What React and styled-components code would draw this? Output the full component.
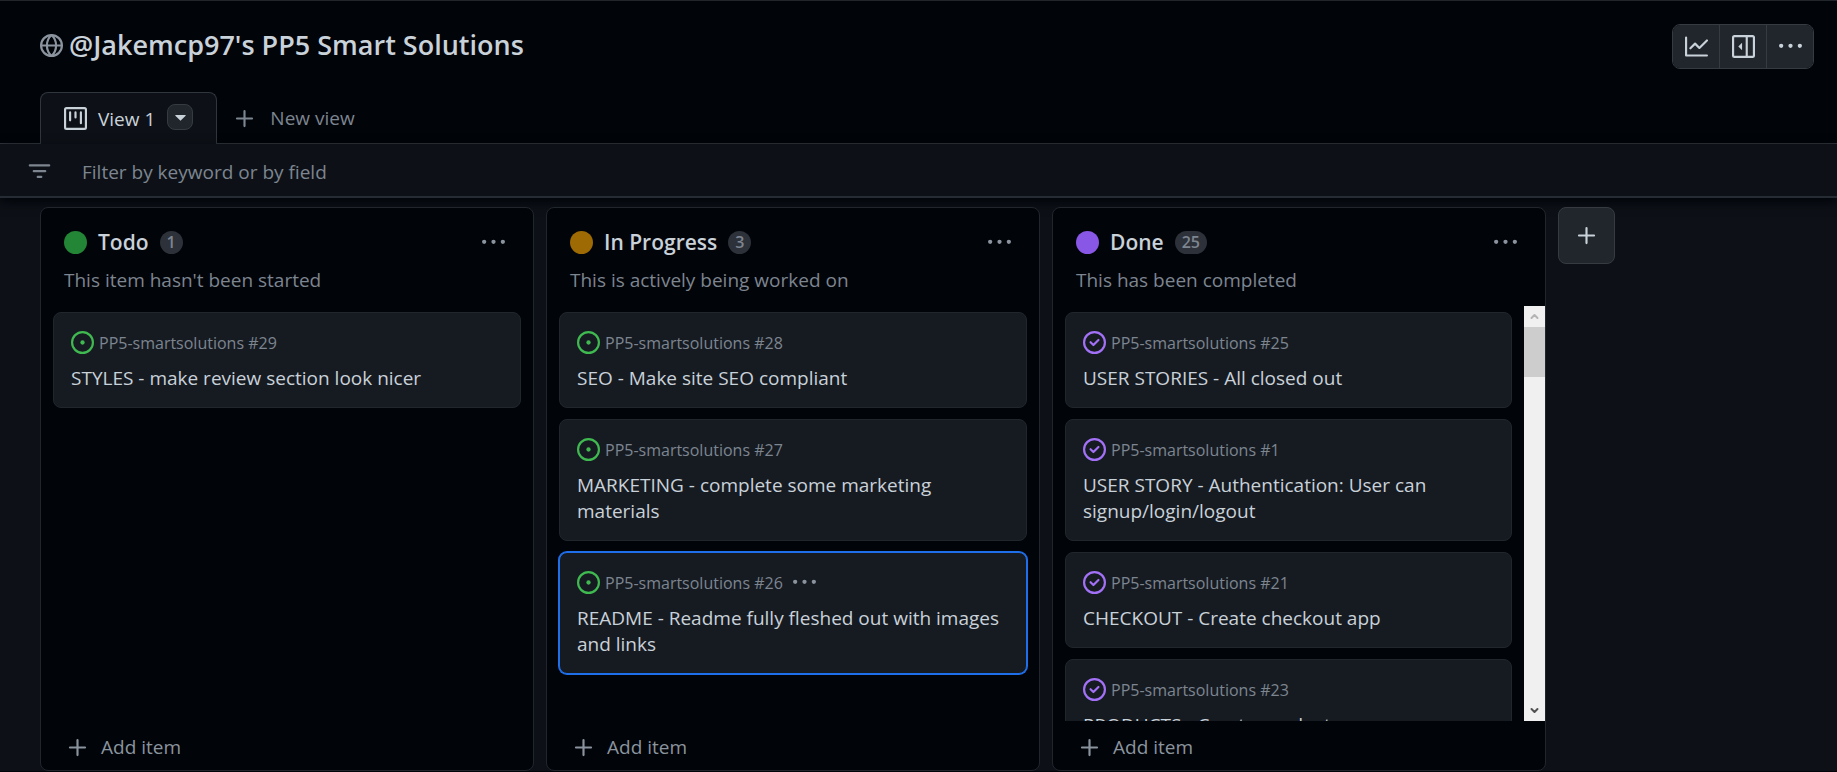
import React from "react";
import styled, { createGlobalStyle } from "styled-components";

const Global = createGlobalStyle`
  *, *::before, *::after { box-sizing: border-box; }
  body {
    margin: 0;
    background: #0d1117;
    color: #c9d1d9;
    font-family: "Segoe UI", "Open Sans", "Noto Sans", sans-serif;
    font-size: 19px;
    line-height: 26px;
  }
  button, input { font: inherit; color: inherit; }
  h1, h2, h3, p, ul { margin: 0; padding: 0; }
  ul { list-style: none; }
`;

const Page = styled.div`
  display: flex;
  flex-direction: column;
  height: 100vh;
  border-bottom: 1px solid #010409;
`;

const Header = styled.header`
  display: flex;
  justify-content: space-between;
  align-items: center;
  padding: 23px 23px 23px 40px;
  background: #010409;
  border-top: 1px solid #21262d;
`;

const TitleGroup = styled.div`
  display: flex;
  align-items: center;
  gap: 6px;
  padding-bottom: 3px;
  color: #8b949e;
`;

const Title = styled.h1`
  color: #c9d1d9;
  font-size: 27px;
  font-weight: 600;
  line-height: 36px;
`;

const ButtonGroup = styled.div`
  display: flex;
  border: 1px solid #363b42;
  border-radius: 8px;
  overflow: hidden;
`;

const GroupButton = styled.button`
  display: flex;
  align-items: center;
  justify-content: center;
  width: 46px;
  height: 43px;
  padding: 0;
  border: 0;
  background: #21262d;
  color: #c9d1d9;
  & + & {
    width: 47px;
    border-left: 1px solid #363b42;
  }
`;

const Tabs = styled.nav`
  display: flex;
  align-items: stretch;
  height: 52px;
  padding-left: 40px;
  background: #010409;
  box-shadow: inset 0 -1px #30363d;
`;

const Tab = styled.div`
  display: flex;
  align-items: center;
  padding: 0 23px;
  border: 1px solid #30363d;
  border-bottom: 0;
  border-radius: 8px 8px 0 0;
  background: #0d1117;
`;

const TabLink = styled.a`
  display: flex;
  align-items: center;
  gap: 11px;
  color: #c9d1d9;
  text-decoration: none;
`;

const TabMenu = styled.button`
  display: flex;
  align-items: center;
  justify-content: center;
  width: 26px;
  height: 26px;
  margin: 0 0 4px 12px;
  padding: 0;
  border: 1px solid #363b42;
  border-radius: 8px;
  background: #21262d;
`;

const NewView = styled.button`
  display: flex;
  align-items: center;
  gap: 14px;
  padding: 0 16px;
  border: 0;
  background: none;
  color: #7d8590;
`;

const FilterBar = styled.label`
  display: flex;
  align-items: center;
  gap: 31px;
  height: 54px;
  padding: 3px 28px 0;
  border-bottom: 2px solid #262c33;
  box-shadow: 0 4px 10px #010409;
  color: #7d8590;
`;

const FilterInput = styled.input`
  flex: 1;
  padding: 0;
  border: 0;
  outline: 0;
  background: none;
  &::placeholder { color: #7d8590; opacity: 1; }
`;

const Board = styled.main`
  display: flex;
  flex: 1;
  align-items: stretch;
  gap: 12px;
  min-height: 0;
  padding: 9px 40px 0;
`;

const Column = styled.section`
  display: flex;
  flex-direction: column;
  flex: 0 0 494px;
  min-height: 0;
  border: 1px solid #21262d;
  border-radius: 8px;
  background: #010409;
`;

const ColumnHeader = styled.header`
  padding: 22px 23px 13px;
`;

const ColumnTitleRow = styled.div`
  display: flex;
  align-items: center;
  gap: 11px;
  margin-bottom: 13px;
`;

const Dot = styled.span`
  width: 23px;
  height: 23px;
  border-radius: 50%;
  background: ${(p) => p.$color};
`;

const ColumnTitle = styled.h2`
  font-size: 21px;
  font-weight: 600;
  line-height: 24px;
`;

const Count = styled.span`
  min-width: 22px;
  padding: 0 7px;
  border-radius: 12px;
  background: #2d3139;
  color: #7d8590;
  font-size: 16px;
  font-weight: 600;
  line-height: 23px;
  text-align: center;
`;

const IconButton = styled.button`
  display: flex;
  padding: 0;
  border: 0;
  background: none;
  color: #8b949e;
  margin-left: ${(p) => (p.$end ? "auto" : "5px")};
  margin-right: ${(p) => (p.$end ? "5px" : "0")};
`;

const Description = styled.p`
  color: #7d8590;
`;

const ListArea = styled.div`
  display: flex;
  flex: 1;
  min-height: 0;
`;

const CardList = styled.ul`
  display: flex;
  flex: 1;
  flex-direction: column;
  gap: 11px;
  min-width: 0;
  overflow: hidden;
  padding: 6px 12px;
`;

const CardItem = styled.li`
  flex: none;
  padding: 18px 17px 16px;
  border: 1px solid ${(p) => (p.$selected ? "#1f6feb" : "#21262d")};
  border-radius: 8px;
  background: #161b22;
  box-shadow: ${(p) => (p.$selected ? "0 0 0 1px #1f6feb" : "none")};
`;

const CardMeta = styled.div`
  display: flex;
  align-items: center;
  gap: 5px;
  height: 23px;
  margin-bottom: 11px;
  color: #7d8590;
  font-size: 16px;
`;

const CardTitle = styled.h3`
  font-size: 19px;
  font-weight: 400;
`;

const CardLink = styled.a`
  color: #c9d1d9;
  text-decoration: none;
`;

const Scrollbar = styled.div`
  display: flex;
  flex-direction: column;
  width: 21px;
  background: #f0f0f0;
`;

const ScrollArrow = styled.span`
  display: flex;
  align-items: center;
  justify-content: center;
  height: 21px;
  color: ${(p) => (p.$active ? "#505050" : "#b4b4b4")};
`;

const ScrollTrack = styled.div`
  flex: 1;
`;

const ScrollThumb = styled.div`
  height: 50px;
  background: #cdcdcd;
`;

const AddItem = styled.button`
  display: flex;
  align-items: center;
  gap: 12px;
  height: 49px;
  padding: 3px 25px 0;
  border: 0;
  background: none;
  color: #8b949e;
  font-weight: 500;
`;

const AddColumn = styled.button`
  display: flex;
  align-items: center;
  justify-content: center;
  width: 57px;
  height: 57px;
  padding: 0;
  border: 1px solid #363b42;
  border-radius: 8px;
  background: #21262d;
`;

const Svg = styled.svg`
  flex: none;
  fill: none;
  stroke: currentColor;
  stroke-width: 1.5;
  stroke-linecap: round;
  stroke-linejoin: round;
`;

const GreenSvg = styled(Svg)`color: #3fb950;`;
const PurpleSvg = styled(Svg)`color: #a371f7;`;

const iconBox = { width: 23, height: 23, viewBox: "0 0 16 16", "aria-hidden": true };

const Globe = () => (
  <Svg {...iconBox}>
    <circle cx="8" cy="8" r="7.25" />
    <path d="M.75 8h14.5M8 .75C5.9 2.7 4.8 5.3 4.8 8s1.1 5.3 3.2 7.25C10.1 13.3 11.2 10.7 11.2 8S10.1 2.7 8 .75Z" />
  </Svg>
);
const Graph = () => (
  <Svg {...iconBox}>
    <path d="M.75 1.75v12.5h14.5M3.75 9.25 7 6l3 3 5.25-5.25" />
  </Svg>
);
const Sidebar = () => (
  <Svg {...iconBox}>
    <rect x=".75" y=".75" width="14.5" height="14.5" rx="1" />
    <path d="M10.25 1v14" />
    <path d="M7 5.4v5.2L4.4 8Z" fill="currentColor" stroke="none" />
  </Svg>
);
const Kebab = () => (
  <Svg {...iconBox}>
    <path stroke="none" fill="currentColor" d="M8 9a1.5 1.5 0 1 0 0-3 1.5 1.5 0 0 0 0 3ZM1.5 9a1.5 1.5 0 1 0 0-3 1.5 1.5 0 0 0 0 3Zm13 0a1.5 1.5 0 1 0 0-3 1.5 1.5 0 0 0 0 3Z" />
  </Svg>
);
const Project = () => (
  <Svg {...iconBox}>
    <rect x=".75" y=".75" width="14.5" height="14.5" rx="1" />
    <path d="M4.25 3.75v5.5M8 3.75v3.5M11.75 3.75v7.5" />
  </Svg>
);
const Triangle = () => (
  <Svg {...iconBox}>
    <path stroke="none" fill="currentColor" d="m4.427 7.427 3.396 3.396a.25.25 0 0 0 .354 0l3.396-3.396A.25.25 0 0 0 11.396 7H4.604a.25.25 0 0 0-.177.427Z" />
  </Svg>
);
const Plus = () => (
  <Svg {...iconBox}><path d="M8 2.75v10.5M2.75 8h10.5" /></Svg>
);
const Filter = () => (
  <Svg {...iconBox}><path d="M1.25 3.75h13.5M4 7.75h8M6.75 11.75h2.5" /></Svg>
);
const IssueOpen = () => (
  <GreenSvg {...iconBox}>
    <circle cx="8" cy="8" r="7.25" />
    <circle cx="8" cy="8" r="1.5" fill="currentColor" stroke="none" />
  </GreenSvg>
);
const IssueClosed = () => (
  <PurpleSvg {...iconBox}>
    <circle cx="8" cy="8" r="7.25" />
    <path d="m5.25 7.75 2 2 3.5-3.5" />
  </PurpleSvg>
);
const Chevron = ({ up }) => (
  <Svg width="9" height="9" viewBox="0 0 9 9" aria-hidden>
    <path strokeWidth="2" d={up ? "M1.5 6l3-3 3 3" : "M1.5 3l3 3 3-3"} />
  </Svg>
);

const columns = [
  {
    name: "Todo", count: 1, color: "#238636", description: "This item hasn't been started",
    cards: [{ id: 29, title: "STYLES - make review section look nicer" }],
  },
  {
    name: "In Progress", count: 3, color: "#9e6a03", description: "This is actively being worked on",
    cards: [
      { id: 28, title: "SEO - Make site SEO compliant" },
      { id: 27, title: "MARKETING - complete some marketing materials" },
      { id: 26, title: "README - Readme fully fleshed out with images and links", selected: true },
    ],
  },
  {
    name: "Done", count: 25, color: "#8957e5", description: "This has been completed", closed: true, scroll: true,
    cards: [
      { id: 25, title: "USER STORIES - All closed out" },
      { id: 1, title: "USER STORY - Authentication: User can signup/login/logout" },
      { id: 21, title: "CHECKOUT - Create checkout app" },
      { id: 23, title: "PRODUCTS - Create product" },
    ],
  },
];

function Card({ card, closed }) {
  return (
    <CardItem $selected={card.selected}>
      <CardMeta>
        {closed ? <IssueClosed /> : <IssueOpen />}
        <span>PP5-smartsolutions #{card.id}</span>
        {card.selected && <IconButton aria-label="Card actions"><Kebab /></IconButton>}
      </CardMeta>
      <CardTitle><CardLink href="#">{card.title}</CardLink></CardTitle>
    </CardItem>
  );
}

function BoardColumn({ column }) {
  return (
    <Column>
      <ColumnHeader>
        <ColumnTitleRow>
          <Dot $color={column.color} />
          <ColumnTitle>{column.name}</ColumnTitle>
          <Count>{column.count}</Count>
          <IconButton $end aria-label="Column actions"><Kebab /></IconButton>
        </ColumnTitleRow>
        <Description>{column.description}</Description>
      </ColumnHeader>
      <ListArea>
        <CardList>
          {column.cards.map((card) => <Card key={card.id} card={card} closed={column.closed} />)}
        </CardList>
        {column.scroll && (
          <Scrollbar aria-hidden>
            <ScrollArrow><Chevron up /></ScrollArrow>
            <ScrollTrack><ScrollThumb /></ScrollTrack>
            <ScrollArrow $active><Chevron /></ScrollArrow>
          </Scrollbar>
        )}
      </ListArea>
      <AddItem><Plus />Add item</AddItem>
    </Column>
  );
}

export default function App() {
  return (
    <Page>
      <Global />
      <Header>
        <TitleGroup>
          <Globe />
          <Title>@Jakemcp97's PP5 Smart Solutions</Title>
        </TitleGroup>
        <ButtonGroup>
          <GroupButton aria-label="Insights"><Graph /></GroupButton>
          <GroupButton aria-label="Project details"><Sidebar /></GroupButton>
          <GroupButton aria-label="More options"><Kebab /></GroupButton>
        </ButtonGroup>
      </Header>
      <Tabs>
        <Tab>
          <TabLink href="#"><Project />View 1</TabLink>
          <TabMenu aria-label="View options"><Triangle /></TabMenu>
        </Tab>
        <NewView><Plus />New view</NewView>
      </Tabs>
      <FilterBar>
        <Filter />
        <FilterInput aria-label="Filter" placeholder="Filter by keyword or by field" />
      </FilterBar>
      <Board>
        {columns.map((column) => <BoardColumn key={column.name} column={column} />)}
        <AddColumn aria-label="Add column"><Plus /></AddColumn>
      </Board>
    </Page>
  );
}
